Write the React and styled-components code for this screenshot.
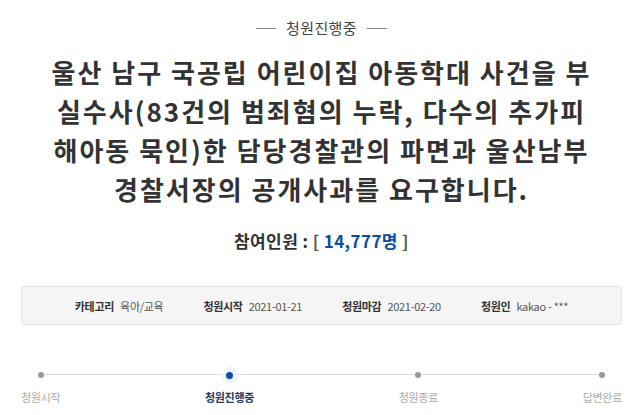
import React from "react";
import styled, { createGlobalStyle } from "styled-components";

const Global = createGlobalStyle`
  html, body { margin: 0; padding: 0; background: #fff; }
  body { font-family: "Noto Sans CJK KR", "Noto Sans", sans-serif; color: #333; }
  * { box-sizing: border-box; }
`;

const Page = styled.div`
  width: 640px;
  padding: 19px 18px 0 21px;
`;

const Status = styled.div`
  display: flex;
  align-items: center;
  justify-content: center;
  gap: 10px;
  font-size: 15px;
  line-height: 18px;
  letter-spacing: 0.4px;
  color: #444;
  &::before, &::after {
    content: "";
    width: 20px;
    height: 1px;
    background: #888;
  }
`;

const Title = styled.h1`
  margin: 15px 0 0;
  padding: 0 24px;
  font-size: 26px;
  line-height: 39px;
  font-weight: 700;
  color: #333;
  text-align: center;
  word-break: break-all;
  letter-spacing: 2px;
`;

const Count = styled.div`
  margin-top: 22px;
  text-align: center;
  font-size: 17px;
  line-height: 22px;
  font-weight: 700;
  letter-spacing: 0.4px;
  color: #333;
`;

const Bracket = styled.span`
  color: #555;
`;

const Number = styled.span`
  color: #0b4ea2;
`;

const InfoBox = styled.div`
  margin-top: 34px;
  height: 39px;
  display: flex;
  align-items: center;
  justify-content: center;
  gap: 40px;
  background: #f5f5f5;
  border: 1px solid #e4e4e4;
  border-radius: 3px;
  font-size: 11px;
  letter-spacing: -0.3px;
`;

const InfoItem = styled.div`
  display: flex;
  align-items: center;
  gap: 6px;
`;

const Label = styled.span`
  font-weight: 700;
  color: #333;
`;

const Value = styled.span`
  color: #555;
`;

const Steps = styled.div`
  position: relative;
  margin-top: 42px;
  display: flex;
  justify-content: space-between;
  &::before {
    content: "";
    position: absolute;
    top: 7px;
    left: 19px;
    right: 20px;
    height: 1px;
    background: #dcdcdc;
  }
`;

const Step = styled.div`
  position: relative;
  display: flex;
  flex-direction: column;
  align-items: center;
  gap: 7px;
`;

const DotWrap = styled.div`
  width: 16px;
  height: 16px;
  border-radius: 50%;
  display: flex;
  align-items: center;
  justify-content: center;
  background: ${(p) => (p.$active ? "#eef3fb" : "transparent")};
`;

const Dot = styled.span`
  width: ${(p) => (p.$active ? "7px" : "6px")};
  height: ${(p) => (p.$active ? "7px" : "6px")};
  border-radius: 50%;
  background: ${(p) => (p.$active ? "#0b4ea2" : "#999")};
`;

const StepLabel = styled.span`
  font-size: 11px;
  line-height: 14px;
  letter-spacing: -0.3px;
  font-weight: ${(p) => (p.$active ? 700 : 400)};
  color: ${(p) => (p.$active ? "#223a62" : "#aaa")};
`;

const info = [
  ["카테고리", "육아/교육"],
  ["청원시작", "2021-01-21"],
  ["청원마감", "2021-02-20"],
  ["청원인", "kakao - ***"],
];

const steps = ["청원시작", "청원진행중", "청원종료", "답변완료"];

export default function App() {
  return (
    <>
      <Global />
      <Page>
        <Status>청원진행중</Status>
        <Title>
          울산 남구 국공립 어린이집 아동학대 사건을 부실수사(83건의 범죄혐의 누락, 다수의 추가피해아동 묵인)한 담당경찰관의 파면과 울산남부경찰서장의 공개사과를 요구합니다.
        </Title>
        <Count>
          참여인원 : <Bracket>[ </Bracket>
          <Number>14,777명</Number>
          <Bracket> ]</Bracket>
        </Count>
        <InfoBox>
          {info.map(([l, v]) => (
            <InfoItem key={l}>
              <Label>{l}</Label>
              <Value>{v}</Value>
            </InfoItem>
          ))}
        </InfoBox>
        <Steps>
          {steps.map((s, i) => (
            <Step key={s}>
              <DotWrap $active={i === 1}>
                <Dot $active={i === 1} />
              </DotWrap>
              <StepLabel $active={i === 1}>{s}</StepLabel>
            </Step>
          ))}
        </Steps>
      </Page>
    </>
  );
}
